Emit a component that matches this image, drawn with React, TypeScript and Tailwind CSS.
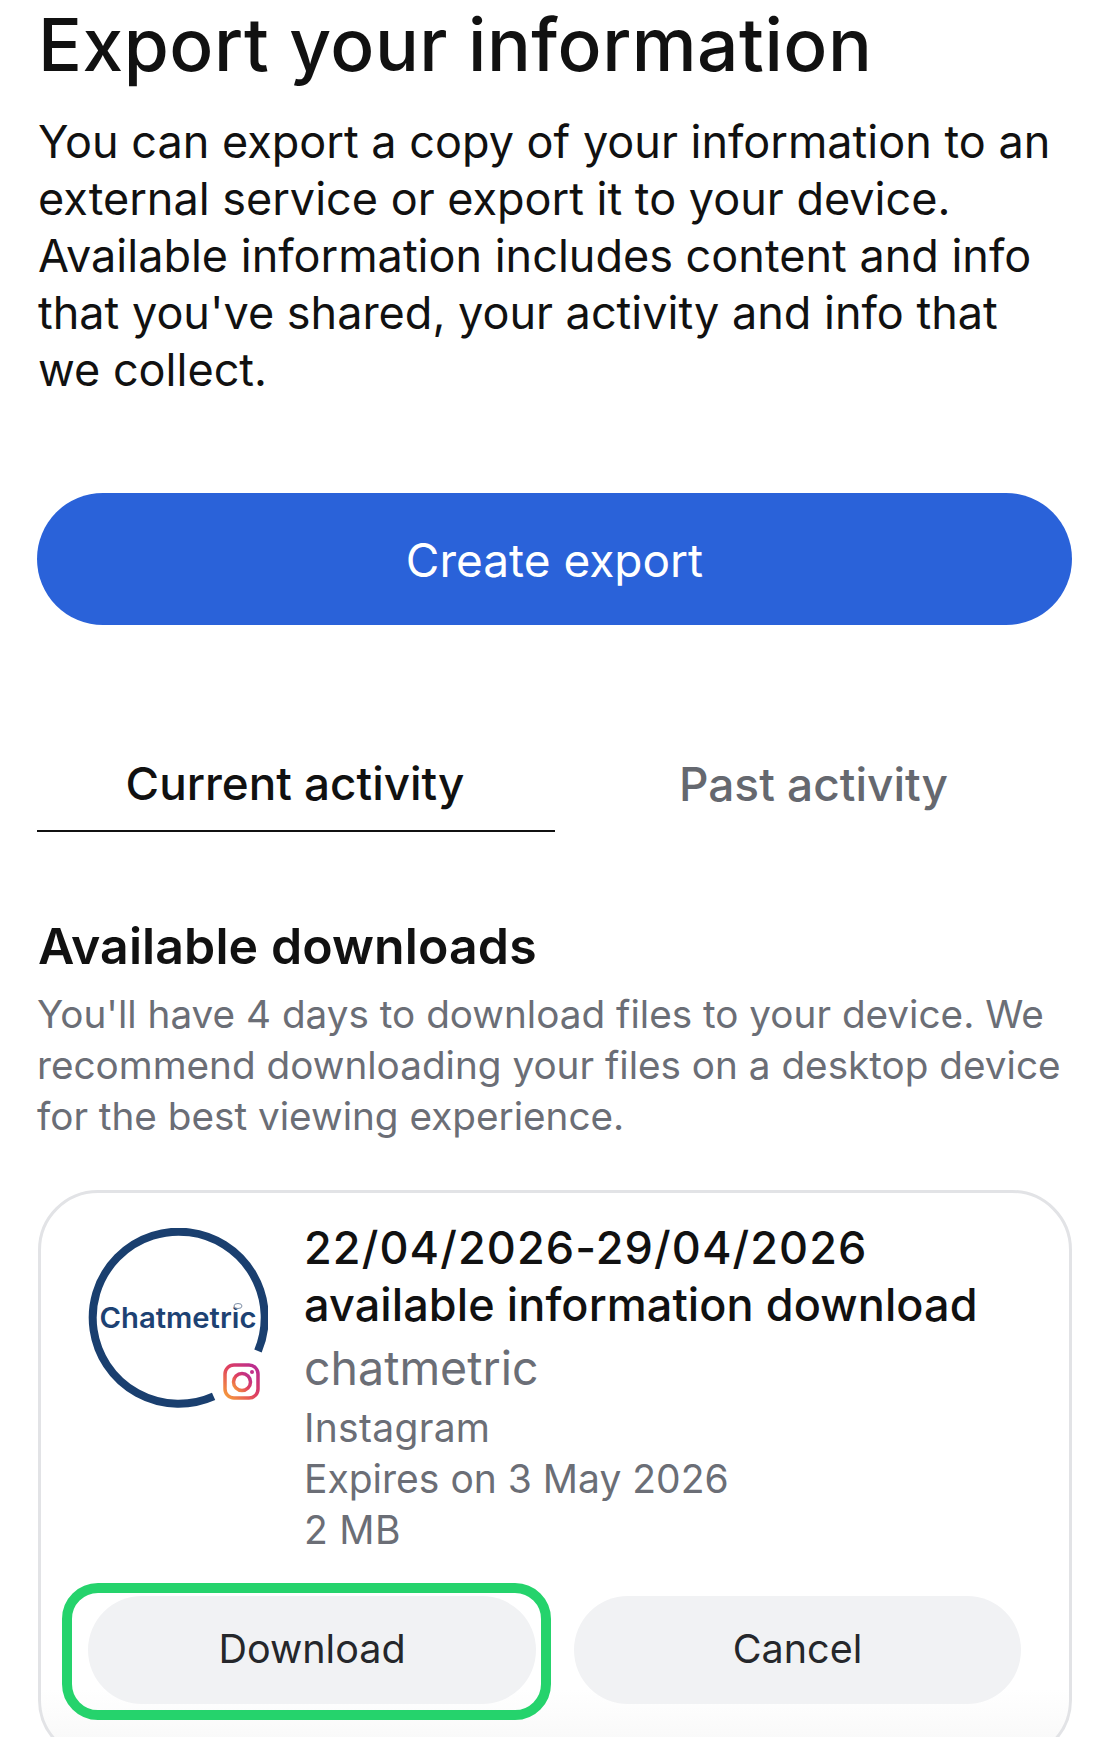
export default function App() {
  return (
    <div className="h-[1737px] w-[1103px] overflow-hidden bg-white font-['Inter',sans-serif] text-[#111111]">
      <div className="px-[37px]">
        <h1 className="pt-[3px] pl-px text-[73px] leading-[84px] font-medium tracking-[0.5px]">Export your information</h1>
        <p className="mt-[26px] w-[1026px] pl-px text-[45px] leading-[57px]">
          You can export a copy of your information to an external service or export it to your device. Available information includes content and info that you've shared, your activity and info that we collect.
        </p>
        <button className="mt-[95px] flex h-[132px] w-[1035px] items-center justify-center rounded-full bg-[#2a62d9] pt-[3px] text-[46px] text-white">
          Create export
        </button>
        <div className="mt-[109px] flex w-[1035px]">
          <div className="h-[98px] w-[518px] border-b-[2px] border-[#111111] pt-[20px] pr-[2px] text-center text-[45.8px] leading-[60px] font-medium">Current activity</div>
          <div className="h-[98px] w-[517px] pt-[20px] text-center text-[46px] leading-[60px] font-medium text-[#65686f]">Past activity</div>
        </div>
        <h2 className="mt-[79px] pl-px text-[50px] leading-[70px] font-semibold tracking-[0.1px]">Available downloads</h2>
        <p className="mt-[8px] w-[1036px] text-[38.7px] leading-[51px] text-[#6b6e76]">
          You'll have 4 days to download files to your device. We recommend downloading your files on a desktop device for the best viewing experience.
        </p>
        <div className="mt-[48px] ml-px h-[570px] w-[1034px] rounded-[60px] border-[3px] border-[#e2e3e6] bg-gradient-to-b from-white from-[88%] to-[#f7f7f7]">
          <div className="flex pt-[35px] pl-[47px]">
            <svg viewBox="0 0 180 180" className="h-[180px] w-[180px] shrink-0">
              <defs>
                <linearGradient id="ig" x1="0" y1="1" x2="1" y2="0">
                  <stop offset="0" stopColor="#f7a03a" />
                  <stop offset="0.5" stopColor="#e0405f" />
                  <stop offset="1" stopColor="#b52a96" />
                </linearGradient>
              </defs>
              <path d="M 125.6 168.3 A 86 86 0 1 1 170 123" fill="none" stroke="#1a3f6f" strokeWidth="8" />
              <text x="90" y="100" textAnchor="middle" fontSize="28" fontWeight="600" fill="#1d4273" fontFamily="Inter, sans-serif" textLength="157" lengthAdjust="spacingAndGlyphs">Chatmetric</text>
              <ellipse cx="150" cy="78" rx="4" ry="2.5" fill="#ffffff" stroke="#7d8ea6" strokeWidth="1" />
              <g fill="none" stroke="url(#ig)">
                <rect x="137" y="137" width="33" height="33" rx="9" strokeWidth="3.5" />
                <circle cx="154" cy="154" r="8.5" strokeWidth="3.5" />
              </g>
              <circle cx="164" cy="144" r="2" fill="#c4308a" />
            </svg>
            <div className="-mt-[9px] ml-[36px] min-w-0 flex-1">
              <div className="text-[45px] leading-[57px] font-medium">
                <span className="block tracking-[1.1px]">22/04/2026-29/04/2026</span>
                <span className="block tracking-[0.1px]">available information download</span>
              </div>
              <div className="mt-[5px] text-[46.5px] leading-[60px] text-[#6b6e76]">chatmetric</div>
              <div className="mt-[4px] text-[39px] leading-[51px] tracking-[0.3px] text-[#6b6e76]">Instagram</div>
              <div className="text-[39px] leading-[51px] text-[#6b6e76]">Expires on 3 May 2026</div>
              <div className="text-[39px] leading-[51px] tracking-[0.3px] text-[#6b6e76]">2 MB</div>
            </div>
          </div>
          <div className="mt-[41px] flex gap-[38px] pl-[47px]">
            <div className="relative">
              <button className="flex h-[108px] w-[448px] items-center justify-center rounded-full bg-[#f1f2f4] text-[39.5px] font-normal text-[#25272b]">Download</button>
              <div className="absolute top-[-13px] left-[-26px] h-[137px] w-[489px] rounded-[36px] border-[10px] border-[#25d36c]" />
            </div>
            <button className="flex h-[108px] w-[447px] items-center justify-center rounded-full bg-[#f1f2f4] text-[39.5px] font-normal text-[#25272b]">Cancel</button>
          </div>
        </div>
      </div>
    </div>
  );
}
